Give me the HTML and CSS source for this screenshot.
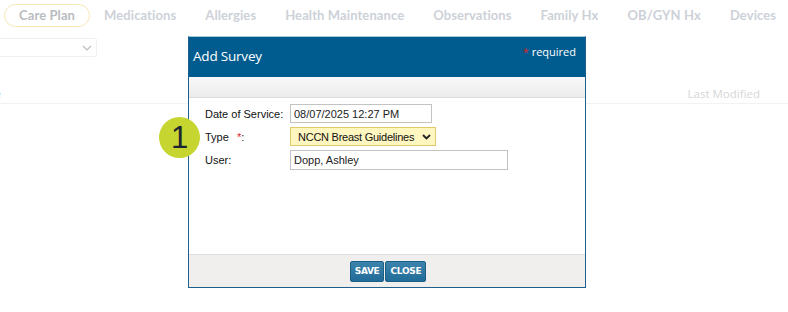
FILE: index.html
```html
<!DOCTYPE html>
<html>
<head>
<meta charset="utf-8">
<link rel="stylesheet" href="styles.css">
</head>
<body>
<div class="page">
  <nav class="tabs">
    <span class="tab active">Care Plan</span>
    <span class="tab">Medications</span>
    <span class="tab">Allergies</span>
    <span class="tab">Health Maintenance</span>
    <span class="tab">Observations</span>
    <span class="tab">Family Hx</span>
    <span class="tab">OB/GYN Hx</span>
    <span class="tab">Devices</span>
  </nav>
  <div class="filter">
    <div class="fake-select">
      <svg class="chev" width="10" height="6" viewBox="0 0 10 6"><path d="M1 1l4 4 4-4" fill="none" stroke="#bbb" stroke-width="1.2"/></svg>
    </div>
  </div>
  <div class="thead">
    <span class="col-name">Name</span>
    <span class="col-mod">Last Modified</span>
  </div>
</div>

<div class="badge">1</div>

<div class="modal">
  <div class="modal-head">
    <span class="modal-title">Add Survey</span>
    <span class="req"><span class="star">*</span> required</span>
  </div>
  <div class="modal-band"></div>
  <div class="modal-body">
    <div class="form">
      <label>Date of Service:</label>
      <div class="input w142">08/07/2025 12:27 PM</div>
      <label>Type <span class="star">*</span>:</label>
      <div class="select"><span>NCCN Breast Guidelines</span>
        <svg width="9" height="6" viewBox="0 0 9 6"><path d="M1 1l3.5 3.5L8 1" fill="none" stroke="#222" stroke-width="1.8"/></svg>
      </div>
      <label>User:</label>
      <div class="input w218">Dopp, Ashley</div>
    </div>
  </div>
  <div class="modal-foot">
    <button class="btn">SAVE</button><button class="btn">CLOSE</button>
  </div>
</div>
</body>
</html>
```

FILE: styles.css
```css
* { box-sizing: border-box; }
html, body { margin: 0; padding: 0; background: #fff; }
body { width: 788px; height: 312px; overflow: hidden; position: relative; font-family: "Liberation Sans", Arial, sans-serif; }

.tabs {
  display: flex;
  align-items: center;
  height: 28px;
  padding: 2px 0 0 4px;
  font-family: "Lato", "Open Sans", sans-serif;
  font-weight: 700;
  font-size: 13px;
  color: #cdd1d8;
  gap: 29px;
}
.tab { white-space: nowrap; letter-spacing: 0.1px; }
.tab.active {
  color: #b9bcc0;
  border: 1px solid #f7e7b4;
  border-radius: 12px;
  padding: 2px 14px 3px;
  margin-right: -15px;
}

.filter { padding: 10px 0 0 0; height: 38px; }
.fake-select {
  width: 98px;
  height: 19px;
  margin-left: -1px;
  border: 1px solid #f0f0f0;
  border-radius: 2px;
  position: relative;
}
.chev { position: absolute; right: 4px; top: 6px; }

.thead {
  display: flex;
  justify-content: space-between;
  height: 38px;
  align-items: flex-end;
  padding-bottom: 2px;
  border-bottom: 1px solid #f2f2f2;
  font-family: "Open Sans", sans-serif;
  font-size: 11.5px;
}
.col-name { color: #b8d3e8; margin-left: -31px; }
.col-mod { color: #d6d6d6; margin-right: 28px; }

.badge {
  position: absolute;
  left: 159px;
  top: 117px;
  width: 41px;
  height: 41px;
  border-radius: 50%;
  background: #c6d52f;
  color: #1b2430;
  font-family: "Liberation Sans", Arial, sans-serif;
  font-size: 31px;
  line-height: 41px;
  text-align: center;
  z-index: 3;
}

.modal {
  position: absolute;
  left: 188px;
  top: 36px;
  width: 398px;
  height: 252px;
  border: 1px solid #1e5f8c;
  border-top-color: #a6c7dc;
  background: #fff;
  display: flex;
  flex-direction: column;
  z-index: 2;
}
.modal-head {
  height: 40px;
  background: #005b8e;
  color: #fff;
  display: flex;
  justify-content: space-between;
  padding: 0 9px 0 4px;
  font-family: "Open Sans", "DejaVu Sans", sans-serif;
}
.modal-title { font-size: 13.5px; margin-top: 10px; letter-spacing: -0.2px; }
.req { font-size: 11px; margin-top: 7px; }
.star { color: #d4262b; }
.modal-band {
  height: 21px;
  background: linear-gradient(#f8f8f8, #ececec);
  border-bottom: 1px solid #dcdcdc;
}
.modal-body { flex: 1; padding: 6px 0 0 16px; }
.form {
  display: grid;
  grid-template-columns: 85px auto;
  row-gap: 4px;
  align-items: center;
  justify-items: start;
  font-size: 11px;
  color: #111;
}
.form label { white-space: nowrap; }
.form label .star { margin-left: 5px; }
.input {
  height: 19px;
  border: 1px solid #c3c3c3;
  padding: 2px 3px;
  line-height: 14px;
  font-size: 11px;
  color: #222;
  white-space: nowrap;
}
.w142 { width: 142px; }
.w218 { width: 218px; height: 20px; }
.select {
  width: 146px;
  height: 19px;
  background: #fff6c0;
  border: 1px solid #e3c96a;
  padding: 0 4px 0 7px;
  display: flex;
  justify-content: space-between;
  align-items: center;
  font-size: 11px;
  letter-spacing: -0.25px;
  color: #111;
  white-space: nowrap;
}
.modal-foot {
  height: 33px;
  background: #f0efed;
  border-top: 1px solid #dedede;
  display: flex;
  justify-content: center;
  align-items: center;
  gap: 1px;
  padding-left: 2px;
}
.btn {
  height: 21px;
  padding: 0 4px;
  border: 1px solid #1c5f86;
  border-radius: 2px;
  background: linear-gradient(#3c84ad, #216c98);
  color: #fff;
  font-family: "DejaVu Sans", Verdana, sans-serif;
  font-weight: 700;
  font-size: 9px;
  letter-spacing: -0.3px;
}
```
